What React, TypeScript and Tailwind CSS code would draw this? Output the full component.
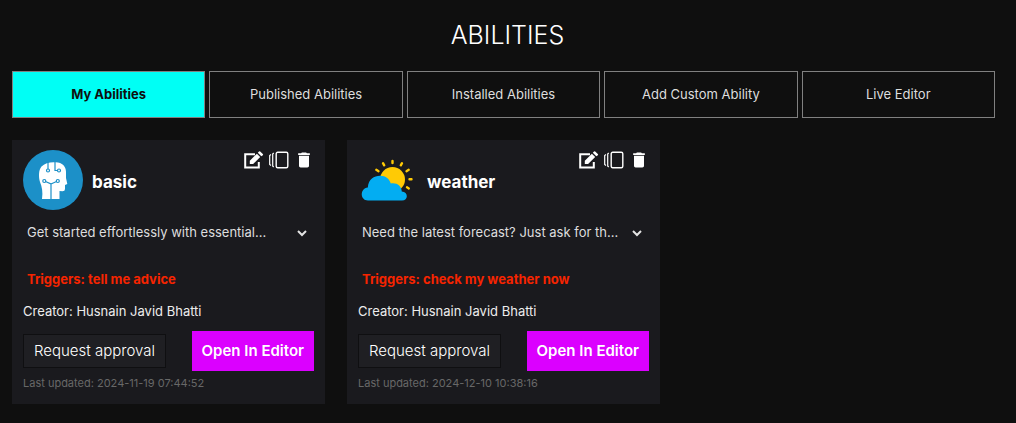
import React, { useState } from "react";
import { MdDelete } from "react-icons/md";

const tabs = [
  "My Abilities",
  "Published Abilities",
  "Installed Abilities",
  "Add Custom Ability",
  "Live Editor",
];

interface Ability {
  name: string;
  logo: React.ReactNode;
  description: string;
  triggers: string;
  creator: string;
  updated: string;
}

function BrainLogo() {
  return (
    <svg viewBox="0 0 60 60" className="size-[60px]" aria-hidden="true">
      <circle cx="30" cy="30" r="30" fill="#1c90c8" />
      <path
        d="M19 49C20 42 19 37 17 32C15.500 27 15.500 20 18.500 16.500C22 12.500 29 11.500 35 12.500C41 13.500 43.500 18 43 24V28L44.300 34L42 35V39Q42 41.300 39.500 41.300L36.500 41V49Z"
        fill="#fff"
      />
      <g fill="none" stroke="#1c90c8" strokeWidth="1.200">
        <path d="M25 12V19M32 12V20.500H34.500M28 49V34L22.500 31.500M28 34L33.500 31.500" />
        <circle cx="25" cy="20.500" r="1.500" />
        <circle cx="36" cy="20.500" r="1.500" />
        <circle cx="21.300" cy="31" r="1.500" />
        <circle cx="34.800" cy="31" r="1.500" />
      </g>
    </svg>
  );
}

function WeatherLogo() {
  return (
    <svg viewBox="0 0 60 60" className="size-[60px]" aria-hidden="true">
      <circle cx="34.500" cy="29.500" r="12.500" fill="#ffca05" />
      <path
        d="M34.500 11V13M44 13.200L42.800 15.300M50.700 19.800L48.500 21.200M51.500 29.300H53.500M49 37.300L50.800 38.400M25 13.200L26.200 15.300M18.300 19.800L20.500 21.200"
        stroke="#ffca05"
        strokeWidth="2.400"
        strokeLinecap="round"
      />
      <path
        d="M10 50.500C2 50.500 1.500 38.500 9.800 37.500C10.500 29 16 25.700 22 25.700C28 25.700 31.500 29 32.800 33.500C39 32.500 43.500 36 43.800 41.500C50.500 42 50.500 50.500 44 50.500Z"
        fill="#03adf2"
      />
    </svg>
  );
}

function EditIcon() {
  return (
    <svg viewBox="0 0 20 18" className="h-[18px] w-5" aria-hidden="true">
      <path d="M11 3.200H1.200V16.500H14.800V11" fill="none" stroke="#fff" strokeWidth="2" />
      <path d="M5.800 9.800L12.900 2.700L16.200 6L9.100 13.100H5.800ZM13.800 1.700L15 .500Q15.600 -.100 16.200 .500L18.800 3.100Q19.400 3.700 18.800 4.300L17.300 5.200Z" fill="#fff" />
    </svg>
  );
}

function VersionsIcon() {
  return (
    <svg viewBox="0 0 20 18" className="h-[18px] w-5" fill="none" stroke="#fff" aria-hidden="true">
      <rect x="7.200" y="1.200" width="11.600" height="15.600" rx="1.500" strokeWidth="1.400" />
      <path d="M4.700 2L3.700 3V15L4.700 16M2 3.500L.7 4.500V13.500L2 14.500" strokeWidth="1.200" />
    </svg>
  );
}

function AbilityCard({ ability }: { ability: Ability }) {
  return (
    <article className="flex flex-col bg-[#1a1a1e] px-[11px] pt-[10px] pb-3">
      <header className="flex h-[60px] items-start">
        {ability.logo}
        <h2 className="ml-[9px] flex-1 self-center pt-1 text-[17px] leading-6 font-bold">
          {ability.name}
        </h2>
        <div className="flex items-center gap-[5px]">
          <button type="button" aria-label={`Edit ${ability.name}`}>
            <EditIcon />
          </button>
          <button type="button" aria-label={`Versions of ${ability.name}`}>
            <VersionsIcon />
          </button>
          <button type="button" aria-label={`Delete ${ability.name}`}>
            <MdDelete className="size-5" />
          </button>
        </div>
      </header>
      <button
        type="button"
        className="mt-[11px] flex h-6 items-center justify-between pr-[5px] pl-1 text-left text-[13px] text-[#dedede]"
      >
        <span className="truncate">{ability.description}</span>
        <svg viewBox="0 0 14 14" className="size-[14px] shrink-0" aria-hidden="true">
          <path d="M3 5L7 9L11 5" fill="none" stroke="#e4e4e4" strokeWidth="2" />
        </svg>
      </button>
      <p className="mt-6 pl-1 text-[13px] leading-5 font-bold text-[#f62400]">
        Triggers: {ability.triggers}
      </p>
      <p className="mt-3 text-[13px] leading-5 text-[#ededed]">Creator: {ability.creator}</p>
      <div className="mt-[10px] flex items-center justify-between">
        <button
          type="button"
          className="h-[34px] border border-[#0f0f11] bg-[#1f1f23] px-[10px] text-[15px] font-light"
        >
          Request approval
        </button>
        <button
          type="button"
          className="h-10 bg-[#db00ff] px-[10px] text-[15px] font-semibold"
        >
          Open In Editor
        </button>
      </div>
      <p className="mt-1 text-[11px] leading-[17px] text-[#686868]">
        Last updated: {ability.updated}
      </p>
    </article>
  );
}

const abilities: Ability[] = [
  {
    name: "basic",
    logo: <BrainLogo />,
    description: "Get started effortlessly with essential...",
    triggers: "tell me advice",
    creator: "Husnain Javid Bhatti",
    updated: "2024-11-19 07:44:52",
  },
  {
    name: "weather",
    logo: <WeatherLogo />,
    description: "Need the latest forecast? Just ask for th...",
    triggers: "check my weather now",
    creator: "Husnain Javid Bhatti",
    updated: "2024-12-10 10:38:16",
  },
];

export default function App() {
  const [active, setActive] = useState(0);

  return (
    <main className="min-h-screen bg-[#0f0f0f] pt-4 pr-[21px] pb-[19px] pl-3 font-['Inter','Liberation_Sans',sans-serif] text-white">
      <h1 className="pl-2 text-center text-[25px] leading-[38px] font-light">ABILITIES</h1>
      <nav className="mt-[17px] grid grid-cols-5 gap-1" aria-label="Abilities">
        {tabs.map((tab, i) => (
          <button
            key={tab}
            type="button"
            onClick={() => setActive(i)}
            className={
              i === active
                ? "h-[47px] border border-[#808080] bg-[#00fff5] text-[13px] font-bold text-[#0f0f0f]"
                : "h-[47px] border border-[#808080] text-[13px] text-[#dedede]"
            }
          >
            {tab}
          </button>
        ))}
      </nav>
      <section className="mt-[22px] grid grid-cols-3 gap-[22px]">
        {abilities.map((ability) => (
          <AbilityCard key={ability.name} ability={ability} />
        ))}
      </section>
    </main>
  );
}
